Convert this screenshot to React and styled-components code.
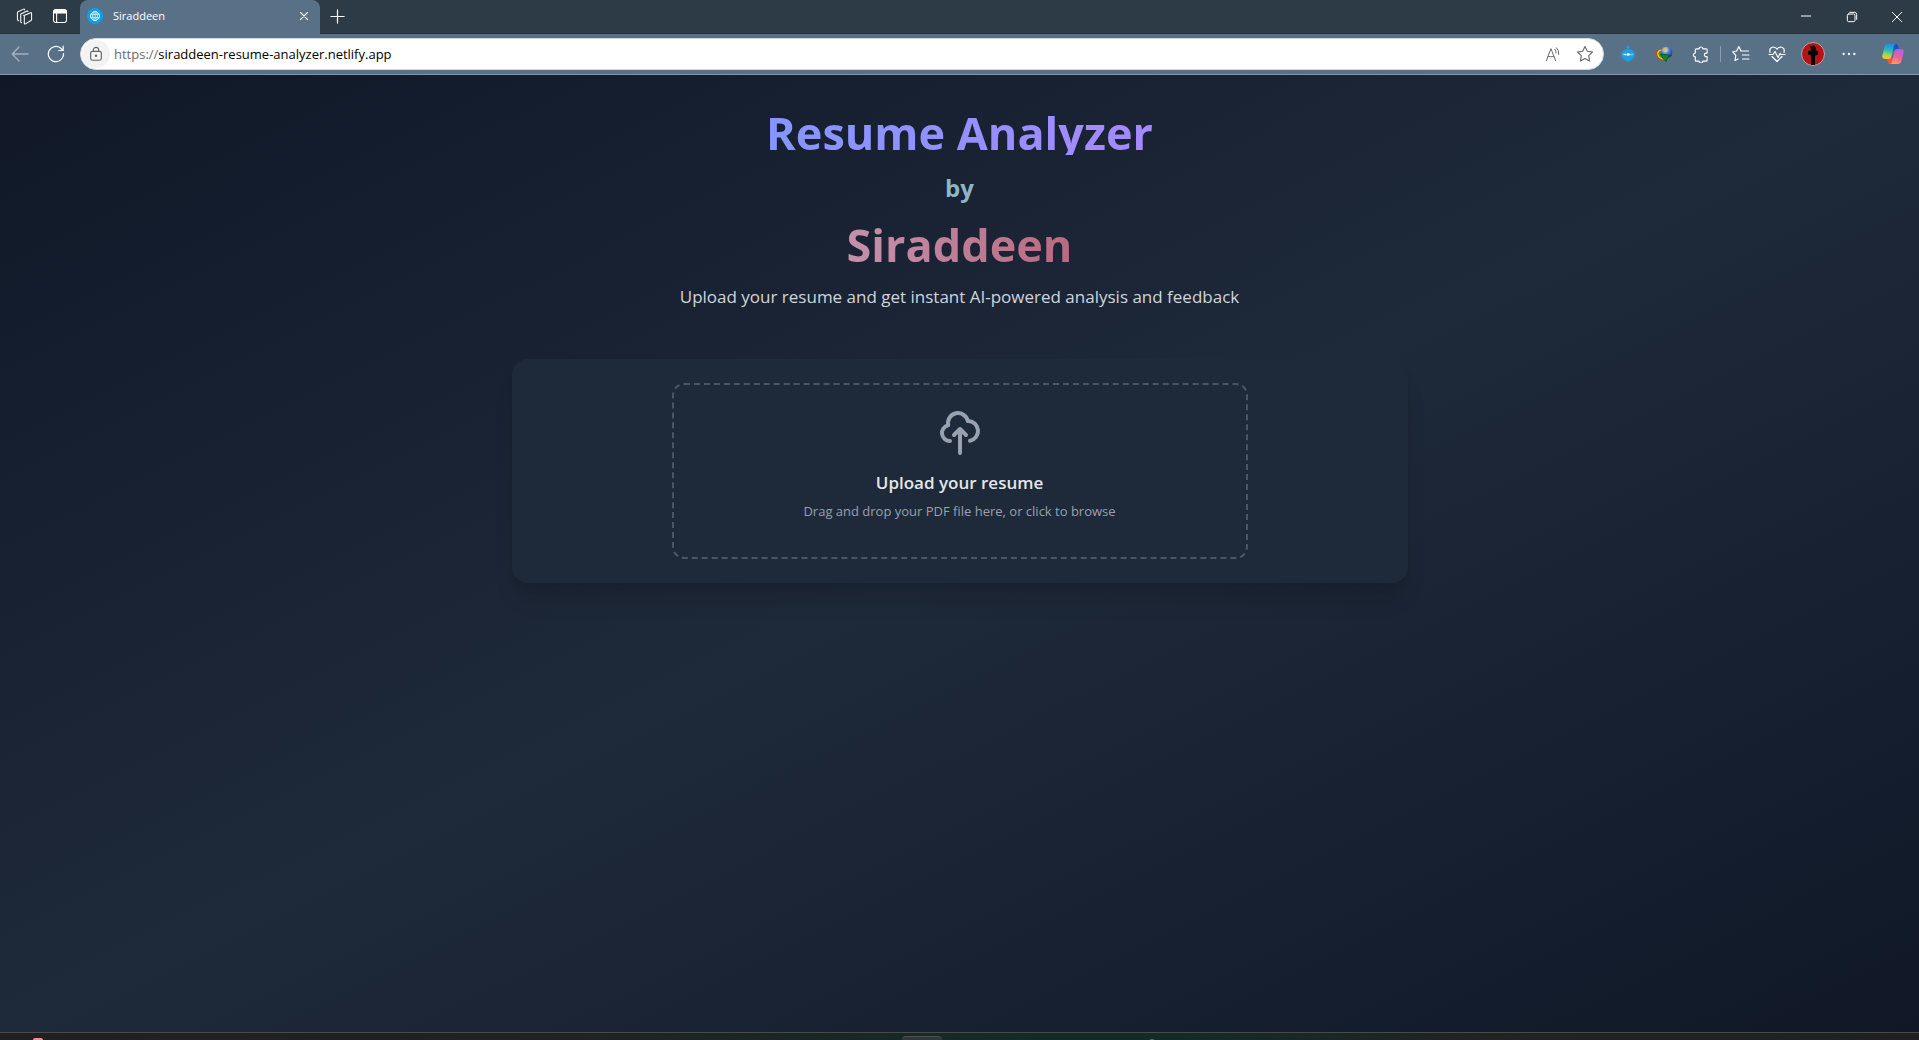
import React, { useRef } from 'react';
import styled, { createGlobalStyle } from 'styled-components';

const GlobalStyle = createGlobalStyle`
  *, *::before, *::after { box-sizing: border-box; }
  body { margin: 0; font-family: "Open Sans", "Noto Sans", sans-serif; background: #101828; }
  h1, h2, p { margin: 0; }
  button { font: inherit; color: inherit; background: none; border: 0; padding: 0; cursor: pointer; }
  svg { display: block; }
`;

const Window = styled.div`
  min-height: 100vh;
  display: flex;
  flex-direction: column;
`;

const TabStrip = styled.header`
  display: flex;
  align-items: flex-start;
  height: 34px;
  background: #2d3b46;
  border-bottom: 1px solid #24303c;
  color: #fff;
`;

const StripTools = styled.div`
  display: flex;
  gap: 4px;
  width: 80px;
  padding-left: 8px;
`;

const IconButton = styled.button`
  display: grid;
  place-items: center;
  flex: none;
  width: ${(p) => p.$w || 32}px;
  height: ${(p) => p.$h || 32}px;
  opacity: ${(p) => (p.$dim ? 0.45 : 1)};
`;

const Tab = styled.div`
  display: flex;
  align-items: center;
  width: 240px;
  height: 34px;
  padding: 0 0 2px 7px;
  gap: 10px;
  border-radius: 8px 8px 0 0;
  background: #597187;
  font-size: 11px;
  line-height: 16px;
`;

const TabTitle = styled.span`
  flex: 1;
`;

const Spacer = styled.div`
  flex: 1;
`;

const WindowControls = styled.div`
  display: flex;
  align-items: flex-start;
`;

const Toolbar = styled.div`
  display: flex;
  align-items: center;
  height: 41px;
  padding-left: 4px;
  background: #597187;
  border-bottom: 1px solid #7f98ad;
  color: #fff;
`;

const NavButtons = styled.div`
  display: flex;
  gap: 4px;
  width: 76px;
`;

const AddressBar = styled.div`
  flex: 1;
  display: flex;
  align-items: center;
  height: 32px;
  padding: 0 2px 0 1px;
  border: 1px solid #d3d7dc;
  border-radius: 16px;
  background: #fff;
  color: #666;
`;

const SiteInfo = styled(IconButton)`
  border-radius: 50%;
  background: #f3f3f3;
`;

const Url = styled.a`
  flex: 1;
  padding-left: 4px;
  color: #000;
  font-size: 13px;
  line-height: 20px;
  text-decoration: none;
`;

const Scheme = styled.span`
  color: #6b6b6b;
`;

const Extensions = styled.div`
  display: flex;
  align-items: center;
  padding-left: 6px;
`;

const Divider = styled.span`
  width: 1px;
  height: 16px;
  margin: 0 2px;
  background: #8a9dae;
`;

const Page = styled.main`
  flex: 1;
  padding: 32px 16px;
  background: linear-gradient(to bottom right, #101828, #1e2939, #101828);
`;

const Intro = styled.section`
  display: flex;
  flex-direction: column;
  align-items: center;
  text-align: center;
  margin-bottom: 48px;
`;

const Display = styled.h1`
  padding-top: 4px;
  font-size: 45px;
  line-height: 44px;
  font-weight: 700;
  color: transparent;
  background: linear-gradient(to right, ${(p) => p.$from}, ${(p) => p.$to});
  background-clip: text;
  -webkit-background-clip: text;
`;

const By = styled.span`
  margin: 16px 0 14px;
  font-size: 24px;
  line-height: 34px;
  font-weight: 700;
  color: #8fb5c6;
`;

const Lead = styled.p`
  margin-top: 16px;
  font-size: 17px;
  line-height: 28px;
  color: #d1d5dc;
`;

const Card = styled.section`
  max-width: 896px;
  margin: 0 auto;
  padding: 24px;
  border-radius: 16px;
  background: #1e2939;
  box-shadow: 0 20px 25px -5px rgba(0, 0, 0, 0.1), 0 8px 10px -6px rgba(0, 0, 0, 0.1);
`;

const DropZone = styled.button`
  display: flex;
  flex-direction: column;
  align-items: center;
  width: 100%;
  max-width: 576px;
  margin: 0 auto;
  && {
    padding: 24px 24px 36px;
    border: 2px dashed #4a5565;
    color: #99a1af;
  }
  border-radius: 12px;
`;

const DropTitle = styled.span`
  margin: 12px 0 4px;
  font-size: 17px;
  line-height: 28px;
  font-weight: 600;
  color: #e5e7eb;
`;

const DropHint = styled.span`
  font-size: 13px;
  line-height: 20px;
`;

const Taskbar = styled.footer`
  display: flex;
  align-items: flex-end;
  height: 8px;
  overflow: hidden;
  border-top: 1px solid #484b4a;
  background: linear-gradient(to right, #202020, #1f2221 30%, #142b25 54%, #142b25 62%, #202322 76%, #202020);
`;

const TaskSlot = styled.div`
  width: ${(p) => p.$share}%;
  padding-left: ${(p) => p.$pad}px;
`;

const TaskDot = styled.span`
  display: block;
  width: ${(p) => p.$w}px;
  height: ${(p) => p.$h}px;
  border-radius: 4px 4px 0 0;
  background: ${(p) => p.$color};
`;

const ActiveTask = styled.span`
  width: 40px;
  height: 4px;
  border-top: 1px solid #4a524f;
  border-radius: 4px 4px 0 0;
  background: #303735;
`;

const Line = ({ size = 18, w = 1.3, children }) => (
  <svg width={size} height={size} viewBox="0 0 18 18" fill="none" stroke="currentColor" strokeWidth={w} strokeLinecap="round" strokeLinejoin="round" aria-hidden="true">
    {children}
  </svg>
);

const GlobeIcon = () => (
  <svg width="16" height="16" viewBox="0 0 16 16" fill="none" stroke="#fff" aria-hidden="true">
    <circle cx="8" cy="8" r="8" fill="#0a9ff0" stroke="none" />
    <circle cx="8" cy="8" r="4.5" />
    <path d="M8 3.5v9M4 6.3h8M4 9.700h8" strokeWidth=".7" />
    <ellipse cx="8" cy="8" rx="2.3" ry="4.5" strokeWidth=".7" />
  </svg>
);

const BlueExtension = () => (
  <svg width="16" height="18" viewBox="0 0 16 18" aria-hidden="true">
    <circle cx="8" cy="2.200" r="1.700" fill="#1d9fe0" />
    <path d="M4 5q4-2 8 0 3 2.200 3 4.500t-2 4.200Q10.500 15.500 8 17.500 5.500 15.500 3 13.700 1 11.800 1 9.500T4 5z" fill="#1d9fe0" />
    <path d="M3.500 9.500h9" stroke="#d8f1ff" strokeWidth="1.300" strokeDasharray="3 1" />
    <circle cx="8" cy="9.500" r="1.200" fill="#fff" />
  </svg>
);

const DownloadExtension = () => (
  <svg width="18" height="16" viewBox="0 0 18 16" aria-hidden="true">
    <defs>
      <radialGradient id="globe" cx=".4" cy=".3" r=".8">
        <stop offset="0" stopColor="#e6efff" />
        <stop offset=".45" stopColor="#4b78cf" />
        <stop offset="1" stopColor="#14306f" />
      </radialGradient>
    </defs>
    <ellipse cx="7" cy="8.500" rx="6.500" ry="5.500" transform="rotate(35 7 8.500)" fill="#d63a1e" />
    <ellipse cx="7.500" cy="8.500" rx="5.700" ry="4.700" transform="rotate(35 7.500 8.500)" fill="#f5d51d" />
    <ellipse cx="8" cy="8.800" rx="5" ry="3.700" transform="rotate(35 8 8.800)" fill="#27a33b" />
    <circle cx="11.500" cy="6.300" r="5.800" fill="url(#globe)" />
    <path d="M8 4q2-3 4-2l-1 2.500-2 1z" fill="#d8c33f" />
    <path d="M5.500 8l11 1.500-3.500 1.500-2 4.500-3-3z" fill="#0b8a1e" stroke="#063f0d" strokeWidth=".6" />
  </svg>
);

const Avatar = () => (
  <svg width="24" height="24" viewBox="0 0 24 24" aria-hidden="true">
    <circle cx="12" cy="12" r="11.500" fill="#b31515" stroke="#b9a5a8" />
    <path d="M9.500 5.500 8.500 4l2.500.5q1-1.500 2.500-.5T15 7l-.5 1.500 2.500.5v3.500l-2.500 1-.5 1.500V23h-4v-8l-.5-2L7 12.500V9l3-.5z" fill="#0a0505" />
  </svg>
);

const CopilotIcon = () => (
  <svg width="22" height="20" viewBox="0 0 22 20" aria-hidden="true">
    <defs>
      <linearGradient id="cpl" x1=".5" y1="0" x2=".3" y2="1">
        <stop offset="0" stopColor="#1b8fe8" />
        <stop offset=".45" stopColor="#2dbdb8" />
        <stop offset=".75" stopColor="#b5d34a" />
        <stop offset="1" stopColor="#f7c520" />
      </linearGradient>
      <linearGradient id="cpr" x1=".7" y1="0" x2=".3" y2="1">
        <stop offset="0" stopColor="#a963ee" />
        <stop offset=".5" stopColor="#ee5c9f" />
        <stop offset="1" stopColor="#ffa05a" />
      </linearGradient>
    </defs>
    <path d="M10 0h4q1.500 0 2 1.500L17 5.500h-3.500q-1.500 0-2 1.500z" fill="#1c4fc4" />
    <path d="M12 20H8q-1.500 0-2-1.500L5 14.500h3.500q1.500 0 2-1.500z" fill="#f0563c" />
    <path d="M5.500 0H14q-1.500 0-2 2L9.500 12.500Q9 15 7 15H3Q-.3 15 .4 11.500L2.500 3Q3.300 0 5.500 0z" fill="url(#cpl)" />
    <path d="M16.500 20H8q1.500 0 2-2l2.500-10.500Q13 5 15 5h4q3.300 0 2.600 3.500L19.500 17q-.8 3-3 3z" fill="url(#cpr)" />
  </svg>
);

export default function App() {
  const fileInput = useRef(null);
  return (
    <Window>
      <GlobalStyle />
      <TabStrip>
        <StripTools>
          <IconButton aria-label="Workspaces">
            <Line size={17} w={1.1}>
              <path d="M8.500 8 15.500 5q1-.3 1 .7v6.500q0 .6-.6 1L10 16.800q-1.200.6-1.200-.6V8.700q0-.6-.5-.9L8 7.600" />
              <path d="M6 15.500q-1 0-1-1V7q0-.7.600-1l6-2.800q1-.4 1 .6" />
              <path d="M2.800 13.500Q1.500 13 1.500 12V5q0-.7.600-1l6-2.800q1-.4 1 .6" />
            </Line>
          </IconButton>
          <IconButton aria-label="Tab actions">
            <Line size={16} w={1.2}>
              <rect x="1.700" y="1.700" width="14.600" height="14.600" rx="2.500" />
              <path d="M2.500 2.500h13v3.200h-13z" fill="currentColor" />
              <path d="M5.200 6v10" />
            </Line>
          </IconButton>
        </StripTools>
        <Tab>
          <GlobeIcon />
          <TabTitle>Siraddeen</TabTitle>
          <IconButton aria-label="Close tab">
            <Line size={14} w={1.4}><path d="m4.500 4.500 9 9M13.500 4.500l-9 9" /></Line>
          </IconButton>
        </Tab>
        <IconButton $w={34} aria-label="New tab">
          <Line size={17}><path d="M9 2v14M2 9h14" /></Line>
        </IconButton>
        <Spacer />
        <WindowControls>
          <IconButton $w={46} aria-label="Minimize"><Line size={12} w={1.5}><path d="M2 9h14" /></Line></IconButton>
          <IconButton $w={46} $h={34} aria-label="Restore">
            <Line size={12} w={1.5}><rect x="2" y="4.500" width="11.500" height="11.500" rx="2" /><path d="M5.500 2H13q3 0 3 3v7.500" /></Line>
          </IconButton>
          <IconButton $w={44} $h={34} aria-label="Close"><Line size={12} w={1.5}><path d="m2 2 14 14M16 2 2 16" /></Line></IconButton>
        </WindowControls>
      </TabStrip>
      <Toolbar>
        <NavButtons>
          <IconButton $dim aria-label="Back"><Line><path d="M17 9H1.500M8 2 1.200 9 8 16" /></Line></IconButton>
          <IconButton aria-label="Refresh"><Line w={1.2}><path d="M16.500 8.500A7.600 7.600 0 1 1 13.500 3L16 5.200M16.200 1v4.500h-4.500" /></Line></IconButton>
        </NavButtons>
        <AddressBar>
          <SiteInfo $w={28} $h={28} aria-label="Site information">
            <Line size={16} w={1.3}>
              <rect x="3" y="6" width="12" height="10" rx="2" />
              <path d="M6 6V4.500a3 3 0 0 1 6 0V6" />
              <circle cx="9" cy="11" r=".7" fill="currentColor" />
            </Line>
          </SiteInfo>
          <Url href="https://siraddeen-resume-analyzer.netlify.app">
            <Scheme>https://</Scheme>siraddeen-resume-analyzer.netlify.app
          </Url>
          <IconButton aria-label="Read aloud">
            <Line size={16} w={1.1}>
              <path d="M1.500 16.500 6.700 3l5.200 13.500M3.300 12h6.800M11 3.500q1.700 1.700 1.500 4.500M13 2q3 2.500 2.500 7.500" />
            </Line>
          </IconButton>
          <IconButton aria-label="Add to favorites">
            <Line size={18} w={1.1}>
              <path d="m9 1.500 2.300 4.800 5.200.7-3.800 3.700.9 5.300L9 13.500 4.400 16l.9-5.300L1.500 7l5.200-.7z" />
            </Line>
          </IconButton>
        </AddressBar>
        <Extensions>
          <IconButton $w={36} aria-label="Assistant extension"><BlueExtension /></IconButton>
          <IconButton $w={36} aria-label="Download extension"><DownloadExtension /></IconButton>
          <IconButton $w={36} aria-label="Extensions">
            <Line size={17} w={1.2}>
              <path d="M4.500 3h3a2 2 0 0 1 4 0H15q1 0 1 1v3.500h-1a1.800 1.800 0 0 0 0 3.800h1V15q0 1-1 1h-3.500a2 2 0 0 1-4 0h-3q-1 0-1-1v-3.500a2 2 0 0 1 0-4V4q0-1 1-1z" />
            </Line>
          </IconButton>
          <Divider />
          <IconButton $w={36} aria-label="Favorites">
            <Line size={18} w={1.2}>
              <path d="M6 14 3 15.500l.8-5.200L.8 6.800 4.700 6 6.800 1.500 9 6h7.500M10.500 10H17M10.500 14H17" />
            </Line>
          </IconButton>
          <IconButton $w={36} aria-label="Browser essentials">
            <Line size={18} w={1.2}>
              <path d="M2 7.500Q1 2.500 5.200 2 7.800 2 9 4.200 10.200 2 12.800 2 17 2.500 16 7.500M4 11.500l5 5 5-5M1 9.500h4L7 6.500l3 6 2-4 1 1h4" />
            </Line>
          </IconButton>
          <IconButton $w={36} aria-label="Profile"><Avatar /></IconButton>
          <IconButton $w={36} aria-label="Settings and more">
            <Line size={16}>
              <g fill="currentColor" stroke="none"><circle cx="3" cy="9" r="1.300" /><circle cx="9" cy="9" r="1.300" /><circle cx="15" cy="9" r="1.300" /></g>
            </Line>
          </IconButton>
          <IconButton $w={52} aria-label="Copilot"><CopilotIcon /></IconButton>
        </Extensions>
      </Toolbar>
      <Page>
        <Intro>
          <Display $from="#8496ff" $to="#a689ff">Resume Analyzer</Display>
          <By>by</By>
          <Display $from="#c491ad" $to="#b96a80">Siraddeen</Display>
          <Lead>Upload your resume and get instant AI-powered analysis and feedback</Lead>
        </Intro>
        <Card>
          <DropZone type="button" onClick={() => fileInput.current.click()}>
            <svg width="48" height="48" viewBox="0 0 24 24" fill="none" stroke="currentColor" strokeWidth="2" strokeLinecap="round" strokeLinejoin="round" aria-hidden="true">
              <path d="M7 16a4 4 0 01-.88-7.903A5 5 0 1115.900 6L16 6a5 5 0 011 9.900M15 13l-3-3m0 0l-3 3m3-3v12" />
            </svg>
            <DropTitle>Upload your resume</DropTitle>
            <DropHint>Drag and drop your PDF file here, or click to browse</DropHint>
          </DropZone>
          <input ref={fileInput} type="file" accept="application/pdf" aria-label="Upload your resume" hidden />
        </Card>
      </Page>
      <Taskbar>
        <TaskSlot $share={47} $pad={33}><TaskDot $w={10} $h={2} $color="#f58a8f" /></TaskSlot>
        <ActiveTask />
        <TaskSlot $share={50} $pad={208}><TaskDot $w={4} $h={1} $color="#1679b0" /></TaskSlot>
      </Taskbar>
    </Window>
  );
}
